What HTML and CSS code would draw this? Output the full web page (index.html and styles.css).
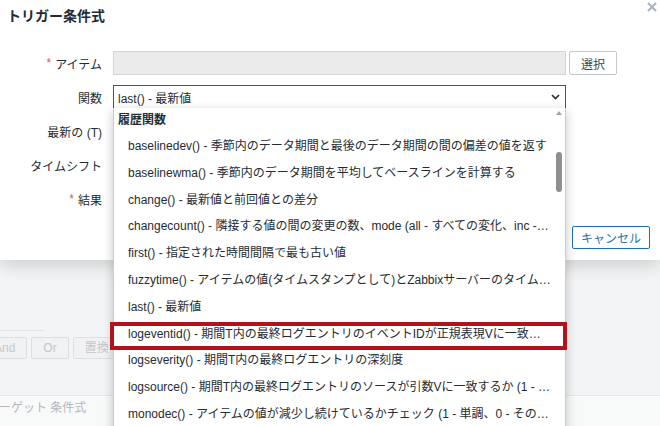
FILE: index.html
```html
<!DOCTYPE html>
<html lang="ja">
<head>
<meta charset="utf-8">
<title>トリガー条件式</title>
<link rel="stylesheet" href="styles.css">
</head>
<body>
<div class="page">
  <section class="dialog">
    <header class="dlg-head">
      <h4 class="dlg-title">トリガー条件式</h4>
      <button class="dlg-close" aria-label="閉じる">
        <svg width="10" height="10" viewBox="0 0 10 10"><path d="M1 1L9 9M9 1L1 9" stroke="#a9b4bd" stroke-width="2" fill="none"/></svg>
      </button>
    </header>
    <div class="form">
      <label class="lbl"><span class="req">*</span>アイテム</label>
      <div class="field">
        <input class="inp" type="text" readonly>
        <button class="btn-grey">選択</button>
      </div>

      <label class="lbl">関数</label>
      <div class="field">
        <div class="select">
          <span class="sel-val">last() - 最新値</span>
          <svg class="chev" width="9" height="6" viewBox="0 0 9 6"><path d="M1 1l3.5 3.5L8 1" fill="none" stroke="#1f2c33" stroke-width="1.6"/></svg>
          <div class="dropdown">
            <ul class="opts">
              <li class="grp">履歴関数</li>
              <li class="opt">baselinedev() - 季節内のデータ期間と最後のデータ期間の間の偏差の値を返す</li>
              <li class="opt">baselinewma() - 季節内のデータ期間を平均してベースラインを計算する</li>
              <li class="opt">change() - 最新値と前回値との差分</li>
              <li class="opt">changecount() - 隣接する値の間の変更の数、mode (all - すべての変化、inc -…</li>
              <li class="opt">first() - 指定された時間間隔で最も古い値</li>
              <li class="opt">fuzzytime() - アイテムの値(タイムスタンプとして)とZabbixサーバーのタイム…</li>
              <li class="opt">last() - 最新値</li>
              <li class="opt">logeventid() - 期間T内の最終ログエントリのイベントIDが正規表現Vに一致…</li>
              <li class="opt">logseverity() - 期間T内の最終ログエントリの深刻度</li>
              <li class="opt">logsource() - 期間T内の最終ログエントリのソースが引数Vに一致するか (1 - …</li>
              <li class="opt">monodec() - アイテムの値が減少し続けているかチェック (1 - 単調、0 - その…</li>
            </ul>
            <div class="sbar"><span class="sbar-up"></span><span class="sbar-thumb"></span></div>
          </div>
        </div>
      </div>

      <label class="lbl">最新の (T)</label>
      <div class="field"></div>

      <label class="lbl">タイムシフト</label>
      <div class="field"></div>

      <label class="lbl"><span class="req">*</span>結果</label>
      <div class="field"></div>
    </div>
    <footer class="dlg-foot">
      <button class="btn-alt">キャンセル</button>
    </footer>
  </section>

  <section class="backdrop">
    <div class="bd-rule"></div>
    <div class="bd-btns">
      <span class="bd-btn">And</span>
      <span class="bd-btn">Or</span>
      <span class="bd-btn">置換</span>
    </div>
    <div class="bd-table">
      <div class="bd-th">ターゲット 条件式</div>
    </div>
  </section>

  <div class="annotation"></div>
</div>
</body>
</html>
```

FILE: styles.css
```css
* { box-sizing: border-box; }
html, body { margin: 0; padding: 0; }
body {
  width: 660px;
  height: 426px;
  overflow: hidden;
  font-family: "Liberation Sans", "Noto Sans CJK JP", sans-serif;
  font-size: 12px;
  color: #1f2c33;
  background: #f3f4f5;
}
.page {
  position: relative;
  width: 660px;
  height: 426px;
  overflow: hidden;
}

/* dialog */
.dialog {
  position: relative;
  z-index: 2;
  height: 260px;
  background: #fff;
  display: flex;
  flex-direction: column;
  box-shadow: 0 4px 18px rgba(0, 0, 0, 0.18);
}
.dlg-head {
  display: flex;
  justify-content: space-between;
  align-items: flex-start;
  padding: 0 3px 0 7px;
}
.dlg-title {
  margin: 7px 0 0;
  font-size: 14px;
  line-height: 18px;
  font-weight: bold;
  color: #1f2c33;
}
.dlg-close {
  display: block;
  margin-top: 2px;
  padding: 0;
  width: 10px;
  height: 10px;
  border: 0;
  background: none;
}
.dlg-close svg { display: block; }

.form {
  display: grid;
  grid-template-columns: 102px 1fr;
  grid-auto-rows: 24px;
  column-gap: 11px;
  row-gap: 10px;
  margin-top: 26px;
}
.lbl {
  display: flex;
  align-items: center;
  justify-content: flex-end;
  white-space: nowrap;
}
.req {
  color: #e05a5a;
  margin-right: 4px;
}
.field {
  display: flex;
  gap: 3px;
}
.inp {
  width: 453px;
  height: 24px;
  margin: 0;
  padding: 0 5px;
  border: 1px solid #d2d6d9;
  background: #ebebeb;
  font: inherit;
}
.btn-grey {
  width: 48px;
  height: 24px;
  padding: 0;
  border: 1px solid #c3c8cc;
  border-radius: 2px;
  background: #fff;
  color: #3b4750;
  font: inherit;
}

.select {
  position: relative;
  width: 453px;
  height: 24px;
  display: flex;
  align-items: center;
  justify-content: space-between;
  padding: 0 5px 0 4px;
  border: 1px solid #1d5d9a;
  background: #fff;
}
.chev { display: block; }

.dropdown {
  position: absolute;
  top: 22px;
  left: -1px;
  width: 453px;
  height: 330px;
  display: flex;
  background: #fff;
  border: 1px solid #c8cdd1;
  border-top: 0;
  box-shadow: 0 3px 10px rgba(0, 0, 0, 0.22);
  z-index: 5;
}
.opts {
  flex: 1;
  min-width: 0;
  margin: 0;
  padding: 0;
  list-style: none;
}
.grp {
  height: 25px;
  line-height: 24px;
  padding-left: 4px;
  font-weight: bold;
}
.opt {
  line-height: 26.8px;
  padding: 0 0 0 14px;
  white-space: nowrap;
  overflow: hidden;
}
.sbar {
  width: 12px;
  flex: none;
  display: flex;
  flex-direction: column;
  align-items: center;
  padding-top: 3px;
}
.sbar-up {
  width: 0;
  height: 0;
  border-left: 3.5px solid transparent;
  border-right: 3.5px solid transparent;
  border-bottom: 4px solid #a3a3a3;
}
.sbar-thumb {
  width: 6px;
  height: 40px;
  margin-top: 37px;
  border-radius: 3px;
  background: #8f8f8f;
}

.dlg-foot {
  margin-top: auto;
  display: flex;
  justify-content: flex-end;
  padding: 0 10px 11px;
}
.btn-alt {
  width: 78px;
  height: 23px;
  padding: 0;
  border: 1px solid #1f6eae;
  border-radius: 2px;
  background: #fff;
  color: #2a72ae;
  font: inherit;
}

/* page behind the dialog */
.backdrop {
  height: 166px;
  padding-top: 70px;
  background: #f3f4f5;
}
.bd-rule {
  width: 45px;
  border-top: 1px solid #e2e5e7;
}
.bd-btns {
  display: flex;
  gap: 4px;
  margin: 6px 0 0 -18px;
}
.bd-btn {
  height: 22px;
  line-height: 20px;
  padding: 0 11px;
  border: 1px solid #dde0e3;
  border-radius: 2px;
  background: #f1f2f3;
  color: #c3c7cb;
}
.bd-table {
  margin-top: 36px;
  height: 40px;
  border-top: 1px solid #e4e6e8;
  background: #f8f9f9;
}
.bd-th {
  margin-left: -13px;
  line-height: 24px;
  color: #b3b8bc;
}

/* red highlight annotation */
.annotation {
  position: absolute;
  left: 110px;
  top: 322px;
  width: 457px;
  height: 28px;
  border: 4.5px solid #b1131d;
  z-index: 10;
}
```
